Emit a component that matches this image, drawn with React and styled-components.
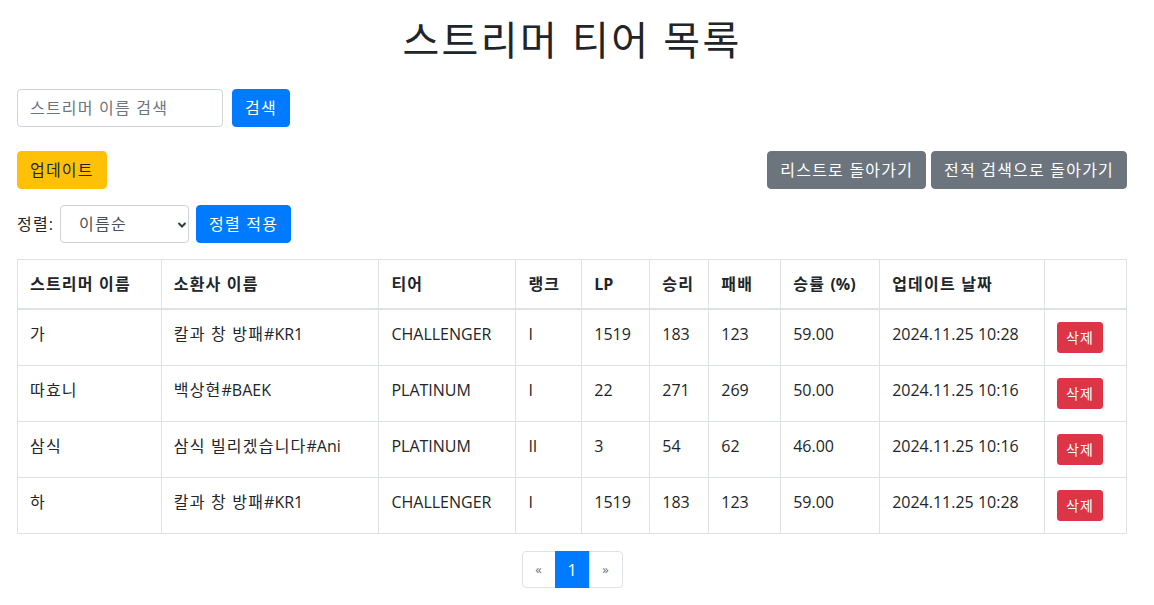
import React from "react";
import styled, { createGlobalStyle } from "styled-components";

const Global = createGlobalStyle`
  html, body { margin: 0; padding: 0; background: #fff; }
  body {
    font-family: "Open Sans", "Noto Sans CJK KR", sans-serif;
    font-size: 16px;
    line-height: 1.5;
    color: #212529;
  }
  * { box-sizing: border-box; }
`;

const Ko = styled.span`
  letter-spacing: ${(p) => p.$ls || 0.075}em;
`;

function T({ children, ls }) {
  const s = String(children);
  const parts = s.split(/([\uAC00-\uD7A3][\uAC00-\uD7A3 ]*)/);
  return parts.map((p, i) =>
    /[\uAC00-\uD7A3]/.test(p) ? (
      <Ko key={i} $ls={ls}>{p}</Ko>
    ) : (
      <React.Fragment key={i}>{p}</React.Fragment>
    )
  );
}

const Page = styled.div`
  width: 1110px;
  margin-left: 17px;
  padding-top: 16px;
  padding-bottom: 18px;
`;

const Title = styled.h1`
  margin: 0 0 25px;
  text-align: center;
  font-size: 40px;
  font-weight: 400;
  line-height: 48px;
`;

const Row = styled.div`
  display: flex;
  align-items: center;
  gap: ${(p) => p.$gap || 8}px;
  margin-bottom: ${(p) => p.$mb || 0}px;
  justify-content: ${(p) => p.$justify || "flex-start"};
`;

const Group = styled.div`
  display: flex;
  gap: 5px;
`;

const Input = styled.input`
  width: 206px;
  height: 38px;
  padding: 6px 12px;
  font: inherit;
  font-size: 16px;
  letter-spacing: 0.075em;
  color: #495057;
  border: 1px solid #ced4da;
  border-radius: 4px;
  outline: none;
  &::placeholder { color: #6c757d; }
`;

const colors = {
  primary: ["#007bff", "#fff"],
  warning: ["#ffc107", "#212529"],
  secondary: ["#6c757d", "#fff"],
  danger: ["#dc3545", "#fff"],
};

const Button = styled.button`
  font: inherit;
  font-size: ${(p) => (p.$sm ? 14 : 16)}px;
  line-height: ${(p) => (p.$sm ? 21 : 24)}px;
  padding: ${(p) => (p.$sm ? "4px 8px" : "6px 12px")};
  border: 1px solid ${(p) => colors[p.$v][0]};
  background: ${(p) => colors[p.$v][0]};
  color: ${(p) => colors[p.$v][1]};
  border-radius: ${(p) => (p.$sm ? 3 : 4)}px;
  cursor: pointer;
  white-space: nowrap;
`;

const Label = styled.label`
  font-size: 16px;
`;

const SelectWrap = styled.div`
  position: relative;
  width: 129px;
  height: 38px;
`;

const Select = styled.select`
  appearance: none;
  width: 100%;
  height: 100%;
  padding: 6px 24px 6px 18px;
  font: inherit;
  letter-spacing: 0.075em;
  color: #495057;
  background: #fff;
  border: 1px solid #ced4da;
  border-radius: 4px;
  outline: none;
`;

const Chevron = styled.svg`
  position: absolute;
  right: 2px;
  top: 16px;
  pointer-events: none;
`;

const Table = styled.table`
  width: 100%;
  border-collapse: collapse;
  margin-bottom: 17px;
`;

const Th = styled.th`
  text-align: left;
  font-weight: 700;
  padding: 12px;
  border: 1px solid #dee2e6;
  border-bottom-width: 2px;
  vertical-align: bottom;
  width: ${(p) => p.$w}px;
`;

const Td = styled.td`
  padding: 12px;
  border: 1px solid #dee2e6;
  vertical-align: top;
`;

const Pager = styled.ul`
  display: flex;
  justify-content: center;
  list-style: none;
  margin: 0;
  padding: 0;
`;

const PageItem = styled.li`
  width: ${(p) => p.$w}px;
  height: 37px;
  display: flex;
  align-items: center;
  justify-content: center;
  font-size: ${(p) => (p.$active ? 16 : 13)}px;
  color: ${(p) => (p.$active ? "#fff" : "#6c757d")};
  background: ${(p) => (p.$active ? "#007bff" : "#fff")};
  border: 1px solid ${(p) => (p.$active ? "#007bff" : "#dee2e6")};
  margin-left: -1px;
  &:first-child { border-radius: 4px 0 0 4px; margin-left: 0; }
  &:last-child { border-radius: 0 4px 4px 0; }
`;

const cols = [
  ["스트리머 이름", 144],
  ["소환사 이름", 218],
  ["티어", 137],
  ["랭크", 66],
  ["LP", 68],
  ["승리", 59],
  ["패배", 72],
  ["승률 (%)", 99],
  ["업데이트 날짜", 165],
  ["", 82],
];

const rows = [
  ["가", "칼과 창 방패#KR1", "CHALLENGER", "I", "1519", "183", "123", "59.00", "2024.11.25 10:28"],
  ["따효니", "백상현#BAEK", "PLATINUM", "I", "22", "271", "269", "50.00", "2024.11.25 10:16"],
  ["삼식", "삼식 빌리겠습니다#Ani", "PLATINUM", "II", "3", "54", "62", "46.00", "2024.11.25 10:16"],
  ["하", "칼과 창 방패#KR1", "CHALLENGER", "I", "1519", "183", "123", "59.00", "2024.11.25 10:28"],
];

export default function App() {
  return (
    <>
      <Global />
      <Page>
        <Title><T ls={0.06}>스트리머 티어 목록</T></Title>
        <Row $gap={9} $mb={24}>
          <Input placeholder="스트리머 이름 검색" />
          <Button $v="primary"><T>검색</T></Button>
        </Row>
        <Row $mb={16} $justify="space-between">
          <Button $v="warning"><T>업데이트</T></Button>
          <Group>
            <Button $v="secondary"><T>리스트로 돌아가기</T></Button>
            <Button $v="secondary"><T>전적 검색으로 돌아가기</T></Button>
          </Group>
        </Row>
        <Row $gap={7} $mb={16}>
          <Label><T>정렬</T>:</Label>
          <SelectWrap>
            <Select defaultValue="name">
              <option value="name">이름순</option>
            </Select>
            <Chevron width="10" height="8" viewBox="0 0 10 8">
              <path d="M1.5 2 L5 5.5 L8.5 2" fill="none" stroke="#343a40" strokeWidth="2" />
            </Chevron>
          </SelectWrap>
          <Button $v="primary"><T>정렬 적용</T></Button>
        </Row>
        <Table>
          <thead>
            <tr>
              {cols.map(([t, w], i) => (
                <Th key={i} $w={w}><T>{t}</T></Th>
              ))}
            </tr>
          </thead>
          <tbody>
            {rows.map((r, i) => (
              <tr key={i}>
                {r.map((c, j) => (
                  <Td key={j}><T>{c}</T></Td>
                ))}
                <Td>
                  <Button $v="danger" $sm><T>삭제</T></Button>
                </Td>
              </tr>
            ))}
          </tbody>
        </Table>
        <Pager>
          <PageItem $w={34}>«</PageItem>
          <PageItem $w={35} $active>1</PageItem>
          <PageItem $w={34}>»</PageItem>
        </Pager>
      </Page>
    </>
  );
}
